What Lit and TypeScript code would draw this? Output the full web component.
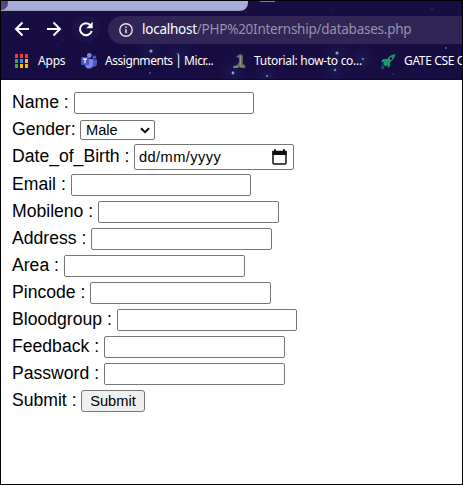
import { LitElement, html, css, svg, nothing } from "lit";
import { customElement } from "lit/decorators.js";

type Kind = "text" | "select" | "date" | "submit";
interface Row { label: string; kind: Kind; offset: number; width: number; height: number; gap: number; }

const ROWS: Row[] = [
  { label: "Name :", kind: "text", offset: 62, width: 180, height: 22, gap: 0 },
  { label: "Gender:", kind: "select", offset: 68, width: 75, height: 20, gap: 6 },
  { label: "Date_of_Birth :", kind: "date", offset: 122, width: 160, height: 26, gap: 4 },
  { label: "Email :", kind: "text", offset: 59, width: 180, height: 22, gap: 4 },
  { label: "Mobileno :", kind: "text", offset: 86, width: 181, height: 22, gap: 5 },
  { label: "Address :", kind: "text", offset: 79, width: 181, height: 22, gap: 5 },
  { label: "Area :", kind: "text", offset: 52, width: 181, height: 22, gap: 5 },
  { label: "Pincode :", kind: "text", offset: 78, width: 181, height: 22, gap: 5 },
  { label: "Bloodgroup :", kind: "text", offset: 105, width: 180, height: 22, gap: 5 },
  { label: "Feedback :", kind: "text", offset: 92, width: 181, height: 22, gap: 5 },
  { label: "Password :", kind: "text", offset: 92, width: 181, height: 22, gap: 5 },
  { label: "Submit :", kind: "submit", offset: 69, width: 64, height: 22, gap: 5 },
];

@customElement("browser-bar")
class BrowserBar extends LitElement {
  static styles = css`
    :host { display: block; height: 79px; background: #180d42; position: relative; overflow: hidden; font-family: "Noto Sans", sans-serif; color: #fff; }
    .backdrop { position: absolute; left: 0; top: 0; }
    .content { position: relative; }
    .tabs { height: 10px; display: flex; }
    .tab { width: 247px; background: linear-gradient(#a9addb 0 8px, #9b9cb5 9px); border-bottom-right-radius: 8px; overflow: hidden; }
    .prev { width: 7px; height: 9px; background: #57477c; border-bottom-right-radius: 7px; }
    .orange { width: 15px; height: 1px; background: #d96b27; margin-left: 12px; }
    .nav { height: 36px; display: flex; align-items: center; }
    .arrows { flex: none; width: 107px; height: 36px; }
    .address { flex: 1; height: 28px; margin-top: 1px; border-radius: 14px 0 0 14px; background: #302555; display: flex; align-items: center; }
    .address svg { margin-left: 11px; flex: none; }
    .url { margin-left: 9px; font-size: 13.5px; line-height: 26px; margin-top: -1px; white-space: nowrap; color: #9992ad; letter-spacing: -0.25px; }
    .url b { font-weight: 400; color: #fff; }
    .marks { height: 28px; display: flex; align-items: center; font-size: 12px; line-height: 28px; white-space: nowrap; }
    .marks > * { flex: none; }
    .icon { display: block; }
    .apps { margin: 0 10px 0 14px; }
    .a { width: 43px; letter-spacing: -0.2px; }
    .b { width: 127px; margin-left: 8px; letter-spacing: -0.45px; }
    .c { width: 127px; margin-left: 8px; letter-spacing: -0.3px; }
    .d { margin-left: 8px; letter-spacing: -0.35px; }
  `;
  render() {
    const stars: [number, number, number, string][] = [
      [150, 50, 1.6, "#8d9bd0"], [177, 53, 1.1, "#687bb5"], [149, 72, 1, "#535a91"], [62, 39, 0.8, "#3c2e69"],
      [336, 52, 1.6, "#8fa0d1"], [362, 58, 1.2, "#5d70ac"], [334, 69, 1.2, "#7181b7"], [232, 72, 1.4, "#8ba3d0"],
      [266, 75, 1.1, "#7082b0"], [445, 47, 1, "#5a6195"], [431, 8, 0.8, "#493f78"], [332, 9, 0.8, "#342a65"], [392, 73, 1, "#30285f"], [245, 11, 0.8, "#3b3068"],
    ];
    const colors = ["#ea4335", "#ea4335", "#ea4335", "#34a853", "#4285f4", "#fbbc05", "#34a853", "#fbbc05", "#fbbc05"];
    return html`
      <svg class="backdrop" width="461" height="79">
        <defs><radialGradient id="g"><stop stop-color="#21336b" stop-opacity=".35" /><stop offset="1" stop-color="#180d42" stop-opacity="0" /></radialGradient></defs>
        ${stars.map(([x, y, r, c]) => svg`${r > 1 ? svg`<circle cx=${x} cy=${y} r="18" fill="url(#g)" />` : nothing}<circle cx=${x} cy=${y} r=${r} fill=${c} />`)}
        <path d="M0 78.5H461" stroke="#120735" />
      </svg>
      <div class="content">
        <div class="tabs"><div class="tab"><div class="prev"></div></div><div class="orange"></div></div>
        <div class="nav">
          <svg class="arrows" viewBox="1 11 107 36" fill="none" stroke="#fff" stroke-width="2">
            <circle cx="86" cy="29" r="14" fill="#1d1247" stroke="none" />
            <path d="M29 29H16.5M22.5 22.5L16 29l6.500 6.500M47 29h12.500M53.500 22.500L60 29l-6.500 6.500" />
            <path d="M90.600 25.300A6 6 0 1 0 91.700 31" />
            <path d="M92.700 21.800v6.400h-6.400z" fill="#fff" stroke="none" />
          </svg>
          <div class="address">
            <svg width="14" height="14" viewBox="0 0 14 14" fill="none" stroke="#e4e1ed"><circle cx="7" cy="7" r="6.200" stroke-width="1.400" /><path d="M7 6.200v4M7 3.500v1.500" stroke-width="1.500" /></svg>
            <span class="url"><b>localhost</b>/PHP%20Internship/databases.php</span>
          </div>
        </div>
        <div class="marks">
          <svg class="icon apps" width="13" height="14">${colors.map((c, i) => svg`<rect x=${(i % 3) * 5} y=${Math.floor(i / 3) * 5} width="3" height="4" fill=${c} />`)}</svg>
          <span class="a">Apps</span>
          <svg class="icon" width="16" height="16" viewBox="0 0 16 16">
            <circle cx="13.300" cy="4.300" r="1.700" fill="#5059c9" /><path d="M10 6.500h6v4.500a3 3 0 0 1-5 2z" fill="#5059c9" />
            <circle cx="8.300" cy="2.500" r="2.400" fill="#7b83eb" /><path d="M4 6h8v5.500a4 4 0 0 1-8 0z" fill="#7b83eb" />
            <rect y="4" width="8" height="8" rx="1" fill="#4b53bc" /><path d="M2 6.200h4M4 6.200v4" stroke="#fff" stroke-width="1.200" />
          </svg>
          <span class="b">Assignments | Micr...</span>
          <svg class="icon" width="14" height="15" viewBox="0 0 14 15"><path d="M6 1l3-1 2 2-.5 7 3 3-.5 2H9l-2-1-1 1H1l1-2 3-1 2-3V4L4 3z" fill="#59705f" /><path d="M8 2l1 4-1 5 3 2M1 13h5" stroke="#9b9c8a" fill="none" /></svg>
          <span class="c">Tutorial: how-to co...</span>
          <svg class="icon" width="15" height="15" viewBox="0 0 15 15"><path d="M14.500 0L9.500 1.500 6 5H2L0 8l3 .2L2 10l2.500 2.500L6.500 11l.2 3L9 12V8.500l4-4z" fill="#169b69" /><circle cx="10" cy="4.500" r="1.300" fill="#180d42" /><path d="M1 11l1 1-1.500 2.500M3 13l-1 2" stroke="#159266" fill="none" /></svg>
          <span class="d">GATE CSE Online</span>
        </div>
      </div>`;
  }
}

@customElement("app-root")
class AppRoot extends LitElement {
  static styles = css`
    :host { display: block; width: 463px; height: 485px; box-sizing: border-box; border: 1px solid #000; background: #fff; overflow: hidden; font-family: "Liberation Sans", Arial, sans-serif; }
    .form { padding: 12px 0 0 11px; }
    .row { display: flex; align-items: center; color: #000; }
    .label { flex: none; font-size: 17.6px; line-height: 18px; padding-bottom: 2px; white-space: nowrap; }
    .control { box-sizing: border-box; display: flex; align-items: center; border: 1px solid #767676; border-radius: 2px; background: #fff; font: 14.67px/18px "Liberation Sans", Arial, sans-serif; color: #000; margin: 0; padding: 0; white-space: nowrap; outline: none; }
    .select { justify-content: space-between; padding: 0 4px 0 5px; }
    .date { justify-content: space-between; padding: 0 6px 0 4px; letter-spacing: 0.4px; }
    .submit { justify-content: center; background: #efefef; border-radius: 3px; }
  `;
  private control(r: Row) {
    const size = `width:${r.width}px;height:${r.height}px`;
    switch (r.kind) {
      case "select":
        return html`<div class="control select" style=${size}><span>Male</span><svg width="10" height="7" viewBox="0 0 10 7"><path d="M1 1.200l4 4 4-4" fill="none" stroke="#000" stroke-width="2" /></svg></div>`;
      case "date":
        return html`<div class="control date" style=${size}><span>dd/mm/yyyy</span><svg width="15" height="16" viewBox="0 0 15 16"><path d="M1 2.500h13V14a1 1 0 0 1-1 1H2a1 1 0 0 1-1-1z" fill="none" stroke="#111" stroke-width="1.500" /><path d="M.5 2h14v4H.5zM2 .3h2v2H2zM11 .3h2v2h-2z" fill="#111" /></svg></div>`;
      case "submit":
        return html`<button class="control submit" style=${size}>Submit</button>`;
      default:
        return html`<input class="control" style=${size} aria-label=${r.label} />`;
    }
  }
  render() {
    return html`<browser-bar></browser-bar>
      <div class="form">${ROWS.map((r) => html`<div class="row" style="margin-top:${r.gap}px"><span class="label" style="width:${r.offset}px">${r.label}</span>${this.control(r)}</div>`)}</div>`;
  }
}
